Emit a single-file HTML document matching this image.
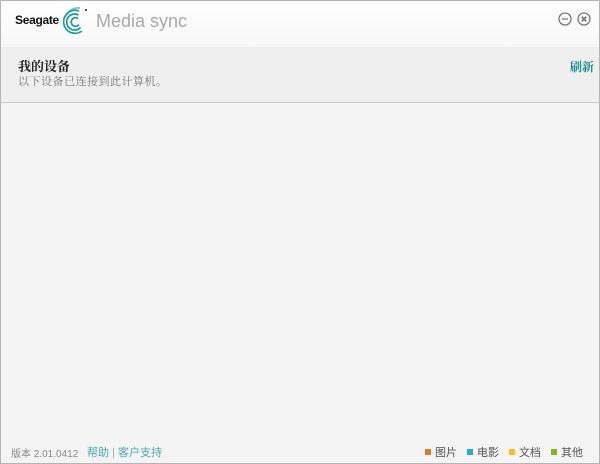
<!DOCTYPE html>
<html><head><meta charset="utf-8"><style>
*{margin:0;padding:0;box-sizing:border-box}
body{width:600px;height:464px;background:#f4f4f4;font-family:"Liberation Sans","Noto Sans CJK SC",sans-serif;position:relative;overflow:hidden;border:1px solid #b5b5b5}
.top{position:absolute;left:0;top:0;width:598px;height:46px;background:linear-gradient(#fff,#f7f7f7)}
.hdr{position:absolute;left:0;top:46px;width:598px;height:56px;background:#efefef;border-bottom:1px solid #c8c8c8}
.t{position:absolute;font-size:12px}
.sq{display:inline-block;width:6px;height:6px;margin-right:4px;vertical-align:1px}
</style></head><body>
<div class="top"></div>
<div class="t" style="left:14px;top:12px;font-size:12px;font-weight:bold;color:#111;letter-spacing:-0.3px">Seagate</div>
<svg style="position:absolute;left:59px;top:5px" width="30" height="30" viewBox="0 0 30 30" fill="none" stroke="#1a9ba0" stroke-width="1.7">
<path d="M19 5 A11.5 11.5 0 1 0 22 25"/><path d="M18.5 9 A8 8 0 1 0 20.5 21.5"/><path d="M18 12.5 A4.3 4.3 0 1 0 19 18.5"/><path d="M20 2 A14 14 0 0 0 6 9" opacity="0.6"/>
<circle cx="26" cy="4" r="1" fill="#222" stroke="none"/></svg>
<div class="t" style="left:95px;top:10px;font-size:18px;color:#a8a8a8">Media sync</div>
<svg style="position:absolute;left:557px;top:11px" width="34" height="14" viewBox="0 0 34 14" fill="none" stroke="#777" stroke-width="1.3">
<circle cx="7" cy="7" r="6"/><path d="M4 7h6"/><circle cx="26" cy="7" r="6"/><path d="M23.8 4.8l4.4 4.4M28.2 4.8l-4.4 4.4" stroke-width="1.8"/></svg>
<div class="hdr"></div>
<div class="t" style="left:17px;top:55px;font-size:13px;color:#222;font-family:'Noto Serif CJK SC',serif;font-weight:bold">我的设备</div>
<div class="t" style="left:17px;top:72px;font-size:11px;color:#777;letter-spacing:0.5px;font-family:'Noto Serif CJK SC',serif">以下设备已连接到此计算机。</div>
<div class="t" style="left:569px;top:57px;font-weight:bold;color:#1a8f94;font-family:'Noto Serif CJK SC',serif">刷新</div>
<div class="t" style="left:10px;top:444px;font-size:10px;color:#888">版本 2.01.0412</div>
<div class="t" style="left:86px;top:443px;font-size:11px;color:#4aa8ac">帮助 <span style="color:#aaa">|</span> 客户支持</div>
<div class="t" style="left:424px;top:443px;font-size:11px;color:#555"><span class="sq" style="background:#e07a22"></span>图片</div>
<div class="t" style="left:466px;top:443px;font-size:11px;color:#555"><span class="sq" style="background:#2aa6dc"></span>电影</div>
<div class="t" style="left:508px;top:443px;font-size:11px;color:#555"><span class="sq" style="background:#f5c020"></span>文档</div>
<div class="t" style="left:550px;top:443px;font-size:11px;color:#555"><span class="sq" style="background:#7cba1a"></span>其他</div>
</body></html>
